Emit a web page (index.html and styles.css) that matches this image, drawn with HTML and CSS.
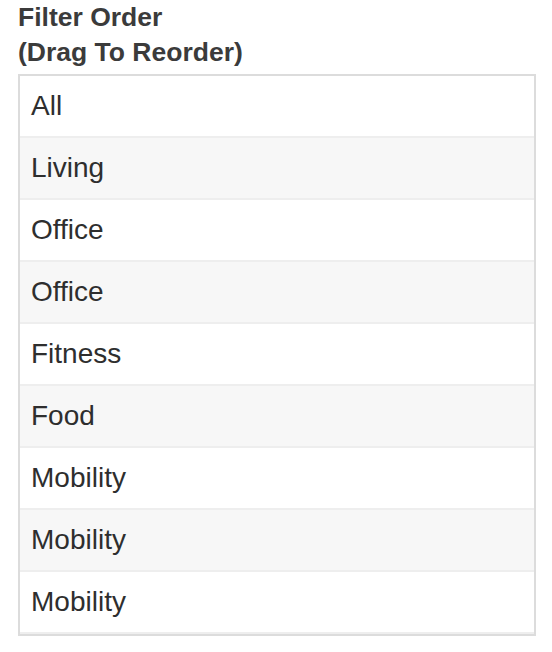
FILE: index.html
```html
<!DOCTYPE html>
<html>
<head>
<meta charset="utf-8">
<link rel="stylesheet" href="styles.css">
</head>
<body>
<div class="panel">
  <h2 class="title">Filter Order<br>(Drag To Reorder)</h2>
  <ul class="list">
    <li class="item">All</li>
    <li class="item">Living</li>
    <li class="item">Office</li>
    <li class="item">Office</li>
    <li class="item">Fitness</li>
    <li class="item">Food</li>
    <li class="item">Mobility</li>
    <li class="item">Mobility</li>
    <li class="item">Mobility</li>
  </ul>
</div>
</body>
</html>
```
FILE: styles.css
```css
html, body {
  margin: 0;
  padding: 0;
  background: #ffffff;
}
body {
  font-family: "Liberation Sans", Arial, sans-serif;
}
.panel {
  width: 518px;
  padding: 0 16px 0 18px;
}
.title {
  margin: 0 0 4px 0;
  font-size: 26.5px;
  line-height: 35px;
  font-weight: bold;
  color: #3b3b3b;
}
.list {
  list-style: none;
  margin: 0;
  padding: 0;
  border: 2px solid #dcdcdc;
}
.item {
  padding: 13px 12px 13px 11px;
  font-size: 28px;
  line-height: 34px;
  color: #2e2e2e;
  background: #ffffff;
  border-bottom: 2px solid #eeeeee;
}
.item:nth-child(even) {
  background: #f7f7f7;
}
```
